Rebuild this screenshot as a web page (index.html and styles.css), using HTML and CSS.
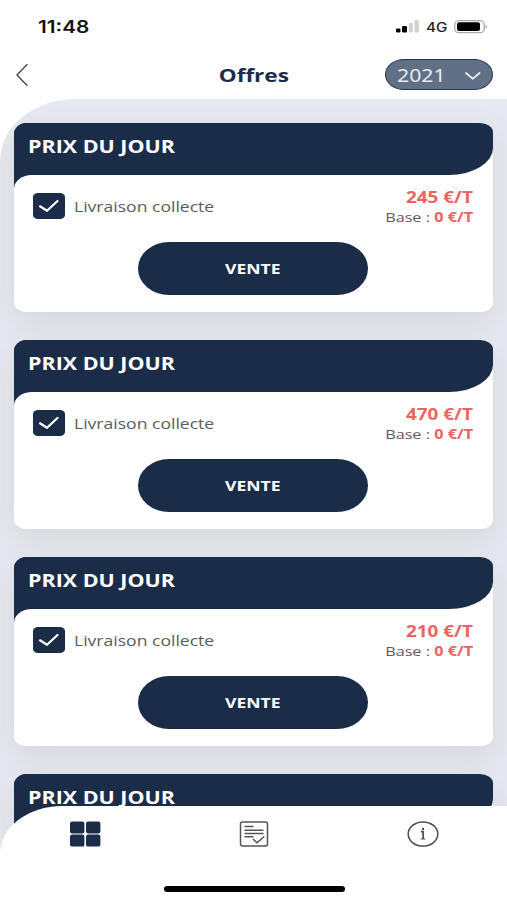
FILE: index.html
```html
<!DOCTYPE html>
<html lang="fr">
<head>
<meta charset="utf-8">
<title>Offres</title>
<link rel="stylesheet" href="styles.css">
</head>
<body>
<div class="app">
  <div class="status">
    <span class="wide time">11:48</span>
    <div class="indicators">
      <svg class="signal" width="24" height="13" viewBox="0 0 24 13"><rect x="0" y="8.5" width="4.5" height="4" rx="1.3"/><rect x="6" y="6" width="5" height="6.5" rx="1.3"/><g fill="#d0d0d2"><rect x="12.8" y="3" width="4" height="9.5" rx="1"/><rect x="18.5" y="0" width="4.3" height="12.5" rx="1"/></g></svg>
      <span class="wide network">4G</span>
      <svg class="battery" width="34" height="14" viewBox="0 0 34 14"><rect x=".7" y=".7" width="29.5" height="12" rx="4" fill="none" stroke="#aaa" stroke-width="1.3"/><rect x="3" y="2.3" width="23" height="8.8" rx="2"/><path d="M31.5 4.7c2.3 1 2.3 3 0 4z" fill="#aaa"/></svg>
    </div>
  </div>
  <header class="header">
    <svg class="back" width="14" height="24" viewBox="0 0 14 24"><path d="M12.3 1.2 2 12l10.3 10.7"/></svg>
    <h1 class="title"><span class="wide">Offres</span></h1>
    <button class="year"><span class="wide">2021</span><svg width="18" height="10" viewBox="0 0 18 10"><path d="M2 2l6.8 5.8L15.6 2"/></svg></button>
  </header>
  <main class="list">
    <article class="card">
      <div class="card-head"><h2 class="wide">PRIX DU JOUR</h2></div>
      <div class="card-body">
        <div class="row">
          <span class="check"><svg width="22" height="14" viewBox="0 0 22 14"><path d="M2 7.3l7 4.5L19.5 2"/></svg></span>
          <span class="wide label">Livraison collecte</span>
          <div class="prices"><b class="wide price">245 €/T</b><span class="wide base">Base : <b>0 €/T</b></span></div>
        </div>
        <button class="sell"><span class="wide">VENTE</span></button>
      </div>
    </article>
    <article class="card">
      <div class="card-head"><h2 class="wide">PRIX DU JOUR</h2></div>
      <div class="card-body">
        <div class="row">
          <span class="check"><svg width="22" height="14" viewBox="0 0 22 14"><path d="M2 7.3l7 4.5L19.5 2"/></svg></span>
          <span class="wide label">Livraison collecte</span>
          <div class="prices"><b class="wide price">470 €/T</b><span class="wide base">Base : <b>0 €/T</b></span></div>
        </div>
        <button class="sell"><span class="wide">VENTE</span></button>
      </div>
    </article>
    <article class="card">
      <div class="card-head"><h2 class="wide">PRIX DU JOUR</h2></div>
      <div class="card-body">
        <div class="row">
          <span class="check"><svg width="22" height="14" viewBox="0 0 22 14"><path d="M2 7.3l7 4.5L19.5 2"/></svg></span>
          <span class="wide label">Livraison collecte</span>
          <div class="prices"><b class="wide price">210 €/T</b><span class="wide base">Base : <b>0 €/T</b></span></div>
        </div>
        <button class="sell"><span class="wide">VENTE</span></button>
      </div>
    </article>
    <article class="card">
      <div class="card-head"><h2 class="wide">PRIX DU JOUR</h2></div>
      <div class="card-body"></div>
    </article>
  </main>
  <nav class="tabs">
    <div class="tab-row">
      <svg width="32" height="26" viewBox="0 0 32 26" fill="#1b2c48"><rect x="1" y=".4" width="14.4" height="12" rx="2.2"/><rect x="17" y=".4" width="14.4" height="12" rx="2.2"/><rect x="1" y="13.6" width="14.4" height="12" rx="2.2"/><rect x="17" y="13.6" width="14.4" height="12" rx="2.2"/></svg>
      <svg width="32" height="26" viewBox="0 0 32 26" fill="none" stroke="#555" stroke-width="1.5"><rect x="2.5" y="1" width="27" height="24" rx="2"/><path d="M6.5 5.6h9M6.5 9.2h19M6.5 12.4h19M6.5 15.8h9M15 18l4 3.8 7.3-6.3"/></svg>
      <svg width="32" height="26" viewBox="0 0 32 26" fill="none" stroke="#4c4c4c" stroke-width="1.5"><ellipse cx="16" cy="13" rx="14.8" ry="12.1"/><path d="M14 10.6h2.1v7.4" stroke-width="1.7"/><path d="M13.8 18h4.6" stroke-width="1"/><circle cx="16" cy="7.9" r="1.2" fill="#4c4c4c" stroke="none"/></svg>
    </div>
    <div class="home-bar"></div>
  </nav>
</div>
</body>
</html>
```
FILE: styles.css
```css
* { box-sizing: border-box; }
body { margin: 0; font-family: "Open Sans", "Noto Sans", sans-serif; }
h1, h2 { margin: 0; }
button { border: 0; padding: 0; font-family: inherit; }
svg { display: block; flex: none; }

.app { width: 507px; height: 900px; overflow: hidden; display: flex; flex-direction: column; background: #fff; }
.wide { display: inline-block; white-space: nowrap; transform: scaleX(1.22); transform-origin: left center; }

.status { height: 50px; flex: none; display: flex; justify-content: space-between; padding: 16px 19px 0 38px; }
.time { font: 600 17px/22px Inter, sans-serif; color: #111; }
.indicators { display: flex; align-items: flex-start; padding-top: 4px; }
.network { font: 500 12.5px/16px Inter, sans-serif; color: #222; margin: 0 10px 0 6px; }

.header { height: 49px; flex: none; display: grid; grid-template-columns: 122px 1fr 122px; align-items: center; padding: 0 14px 0 15px; }
.back { fill: none; stroke: #454951; stroke-width: 1.4; }
.title { text-align: center; font-size: 18.5px; line-height: 26px; color: #1b2c48; }
.title .wide { transform-origin: center; }
.year { justify-self: end; width: 108px; height: 31px; display: flex; align-items: center; justify-content: space-between; padding: 0 10px 0 10.5px; border: 1.5px solid #253655; border-radius: 19px / 15.5px; background: #617084; color: #e5ebf2; font: 17.4px/24px "Noto Sans", sans-serif; }
.year svg { fill: none; stroke: #e5ebf2; stroke-width: 1.8; stroke-linecap: round; stroke-linejoin: round; margin-top: 2px; }

.list { flex: 1; min-height: 0; overflow: hidden; padding: 24px 14px 0; background: #e7e9f0; border-top-left-radius: 75px 62px; display: flex; flex-direction: column; gap: 28px; }
.card { flex: none; height: 189px; border-radius: 13px 13px 12px 12px / 11px 11px 10px 10px; background: linear-gradient(#1b2c48, #1b2c48) left top / 50% 66px no-repeat, #fff; box-shadow: 0 10px 28px rgba(120, 120, 130, .16); display: flex; flex-direction: column; }
.card-head { height: 52px; flex: none; padding: 11px 14px; color: #fff; background: #1b2c48; border-radius: 13px 13px 44px 0 / 11px 9px 27px 0; }
.card-head h2 { font-size: 17.6px; line-height: 24px; }
.card-body { flex: 1; background: #fff; border-radius: 18px 0 12px 12px / 14px 0 10px 10px; padding: 11px 20px 0 19px; display: flex; flex-direction: column; align-items: center; }
.row { align-self: stretch; display: flex; height: 56px; }
.check { width: 31.5px; height: 26px; flex: none; margin-top: 7px; border-radius: 5px / 4px; background: #1b2c48; display: grid; place-items: center; }
.check svg { fill: none; stroke: #fff; stroke-width: 2.2; stroke-linecap: round; stroke-linejoin: round; }
.label { margin: 9.5px 0 0 9.5px; font-size: 14.4px; line-height: 22px; color: #5c5c5c; }
.prices { margin-left: auto; display: flex; flex-direction: column; align-items: flex-end; padding-top: 1px; }
.prices .wide { transform-origin: right center; line-height: 20px; }
.price { color: #ed635f; font-size: 15.5px; }
.base { color: #5c5c5c; font-size: 13.3px; }
.base b { color: #ed635f; }
.sell { width: 230px; height: 53px; border-radius: 31px / 26.5px; background: #1b2c48; color: #fff; font-size: 14.4px; font-weight: 700; }
.sell .wide { transform-origin: center; }

.tabs { position: absolute; left: 0; top: 806px; width: 507px; height: 94px; background: #fff; border-top-left-radius: 62px 48px; display: flex; flex-direction: column; align-items: center; }
.tab-row { align-self: stretch; display: grid; grid-template-columns: repeat(3, 1fr); justify-items: center; padding-top: 15px; }
.home-bar { width: 181px; height: 6px; margin: 38.5px 0 0 1px; border-radius: 3px; background: #000; }
```
